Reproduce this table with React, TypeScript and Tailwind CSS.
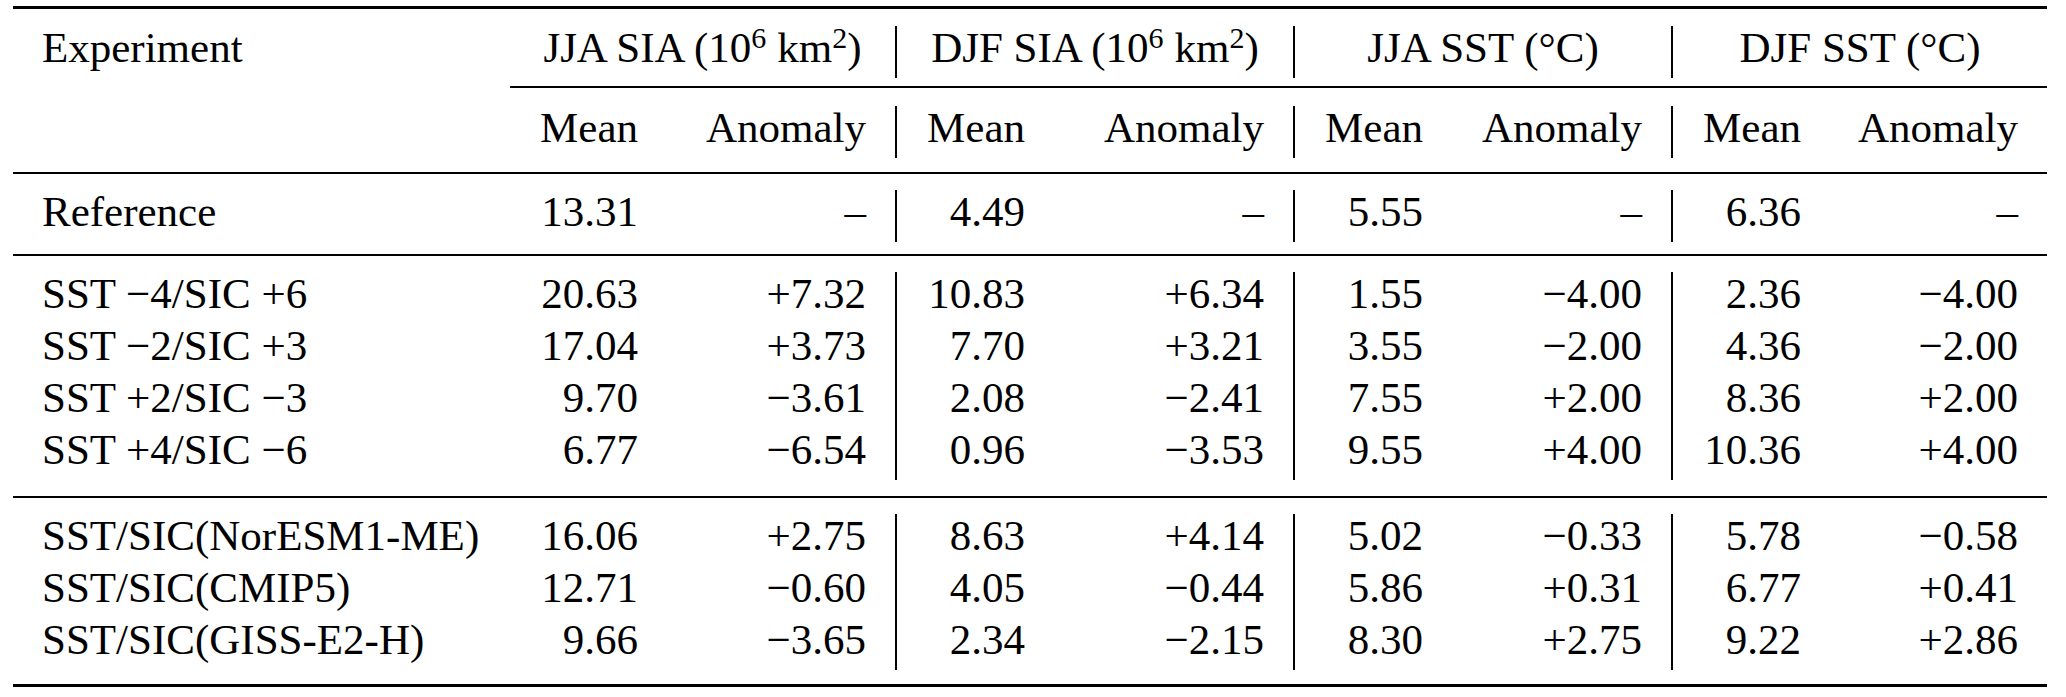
import React from "react";

const grid =
  "grid grid-cols-[497px_158px_229px_158px_240px_158px_220px_158px_216px]";

const cell = [
  "pl-[29px] pt-[2px] leading-[40px] text-left whitespace-nowrap",
  "pr-[30px] pt-[2px] leading-[40px] text-right whitespace-nowrap",
  "pr-[29px] pt-[2px] leading-[40px] text-right whitespace-nowrap border-r-2 border-black",
  "pr-[30px] pt-[2px] leading-[40px] text-right whitespace-nowrap",
  "pr-[29px] pt-[2px] leading-[40px] text-right whitespace-nowrap border-r-2 border-black",
  "pr-[30px] pt-[2px] leading-[40px] text-right whitespace-nowrap",
  "pr-[29px] pt-[2px] leading-[40px] text-right whitespace-nowrap border-r-2 border-black",
  "pr-[30px] pt-[2px] leading-[40px] text-right whitespace-nowrap",
  "pr-[29px] pt-[2px] leading-[40px] text-right whitespace-nowrap",
];

const groups: string[][][] = [
  [["Reference", "13.31", "–", "4.49", "–", "5.55", "–", "6.36", "–"]],
  [
    ["SST −4/SIC +6", "20.63", "+7.32", "10.83", "+6.34", "1.55", "−4.00", "2.36", "−4.00"],
    ["SST −2/SIC +3", "17.04", "+3.73", "7.70", "+3.21", "3.55", "−2.00", "4.36", "−2.00"],
    ["SST +2/SIC −3", "9.70", "−3.61", "2.08", "−2.41", "7.55", "+2.00", "8.36", "+2.00"],
    ["SST +4/SIC −6", "6.77", "−6.54", "0.96", "−3.53", "9.55", "+4.00", "10.36", "+4.00"],
  ],
  [
    ["SST/SIC(NorESM1-ME)", "16.06", "+2.75", "8.63", "+4.14", "5.02", "−0.33", "5.78", "−0.58"],
    ["SST/SIC(CMIP5)", "12.71", "−0.60", "4.05", "−0.44", "5.86", "+0.31", "6.77", "+0.41"],
    ["SST/SIC(GISS-E2-H)", "9.66", "−3.65", "2.34", "−2.15", "8.30", "+2.75", "9.22", "+2.86"],
  ],
];

function Sup({ children }: { children: React.ReactNode }) {
  return <span className="relative -top-[14px] text-[30px]">{children}</span>;
}

function Area({ season }: { season: string }) {
  return (
    <>
      {season} SIA (10<Sup>6</Sup>
      <span className="ml-[11px]">km</span>
      <Sup>2</Sup>)
    </>
  );
}

function Row({ cells }: { cells: string[] }) {
  return (
    <div className={`${grid} h-[52px]`}>
      {cells.map((c, i) => (
        <div key={i} className={cell[i]}>
          {c}
        </div>
      ))}
    </div>
  );
}

export default function App() {
  return (
    <div className="w-[2066px] h-[697px] bg-white pt-[6px] pl-[13px] text-black text-[43px] font-serif">
      <div className="w-[2034px] font-['Liberation_Serif']">
        <div className="h-[3px] bg-black" />
        <div className="h-[17px]" />

        <div className={`${grid} h-[52px]`}>
          <div className={cell[0]}>Experiment</div>
          <div className="col-span-2 pt-[2px] leading-[40px] text-center whitespace-nowrap border-r-2 border-black">
            <Area season="JJA" />
          </div>
          <div className="col-span-2 pt-[2px] leading-[40px] text-center whitespace-nowrap border-r-2 border-black">
            <Area season="DJF" />
          </div>
          <div className="col-span-2 pt-[2px] leading-[40px] text-center whitespace-nowrap border-r-2 border-black">
            JJA SST (°C)
          </div>
          <div className="col-span-2 pt-[2px] leading-[40px] text-center whitespace-nowrap">
            DJF SST (°C)
          </div>
        </div>

        <div className="h-[8px]" />
        <div className={grid}>
          <div className="col-start-2 col-span-8 h-[2px] bg-black" />
        </div>
        <div className="h-[18px]" />

        <Row cells={["", "Mean", "Anomaly", "Mean", "Anomaly", "Mean", "Anomaly", "Mean", "Anomaly"]} />

        <div className="h-[14px]" />
        <div className="h-[2px] bg-black" />
        <div className="h-[16px]" />
        {groups[0].map((r, i) => (
          <Row key={i} cells={r} />
        ))}

        <div className="h-[12px]" />
        <div className="h-[2px] bg-black" />
        <div className="h-[16px]" />
        {groups[1].map((r, i) => (
          <Row key={i} cells={r} />
        ))}

        <div className="h-[16px]" />
        <div className="h-[2px] bg-black" />
        <div className="h-[16px]" />
        {groups[2].map((r, i) => (
          <Row key={i} cells={r} />
        ))}

        <div className="h-[14px]" />
        <div className="h-[3px] bg-black" />
      </div>
    </div>
  );
}
